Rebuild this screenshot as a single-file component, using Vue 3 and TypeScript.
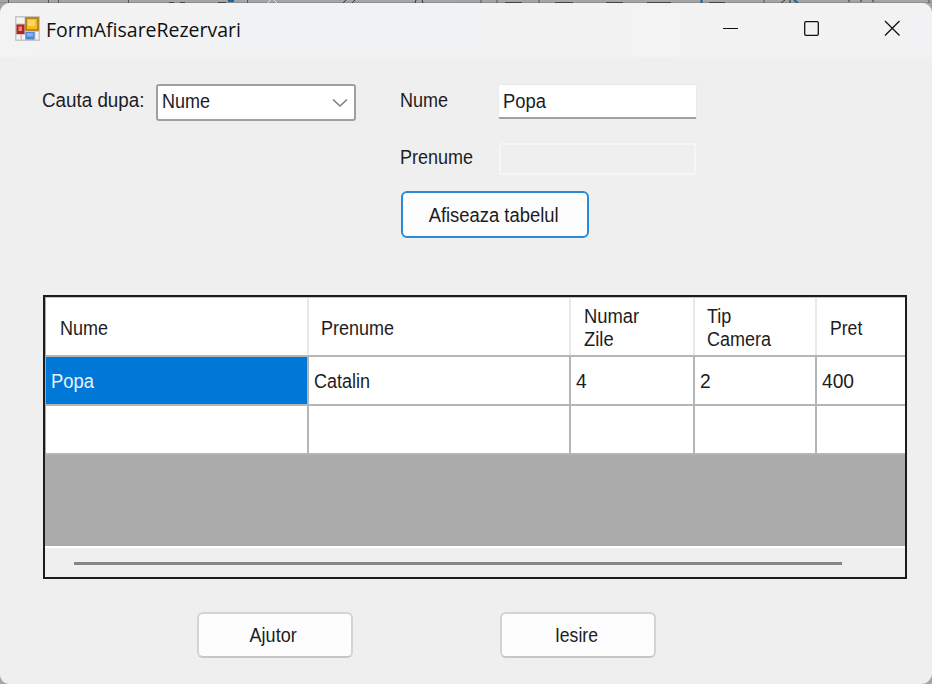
<script setup lang="ts">
import { ref } from 'vue'

interface Column {
  key: string
  lines: string[]
  fit: string
}

interface Cell {
  text: string
  fit: string
}

const searchBy = ref('Nume')
const lastName = ref('Popa')

const columns: Column[] = [
  { key: 'nume', lines: ['Nume'], fit: 'fit-90' },
  { key: 'prenume', lines: ['Prenume'], fit: 'fit-90' },
  { key: 'zile', lines: ['Numar', 'Zile'], fit: 'fit-92' },
  { key: 'camera', lines: ['Tip', 'Camera'], fit: 'fit-90' },
  { key: 'pret', lines: ['Pret'], fit: 'fit-88' },
]

const rows: Cell[][] = [
  [
    { text: 'Popa', fit: 'fit-92' },
    { text: 'Catalin', fit: 'fit-90' },
    { text: '4', fit: 'fit-96' },
    { text: '2', fit: 'fit-96' },
    { text: '400', fit: 'fit-96' },
  ],
  columns.map(() => ({ text: '', fit: 'fit-90' })),
]
</script>

<template>
  <div class="desktop">
    <svg class="backdrop" width="932" height="3" viewBox="0 0 932 3">
      <path d="M0 2.5H932" stroke="#8f8f8f" />
      <path d="M8.500 0V3M48.500 0V3M58.500 0V3M128.500 0V3M247.500 0V3M481 0V3M497 0V3M539 0V3M764 0V3M929 0V3" stroke="#555" />
      <path d="M169 2.500h5M180 2.500h5M218 2.500h8M505 2.500h17M555 2.500h18M606 2.500h17M647 2.500h24M709 2.500h16" stroke="#444" />
      <path d="M343 3l3-3M352 3l3-3M415 3l1-3M423 3l-1-3M781 3l4-3M790 3v-3M849 0v2M861 0v2M873 0v2" stroke="#333" />
      <path d="M228 1h6M701.500 0v3M794 0l4 3" stroke="#17669f" stroke-width="2" />
      <path d="M268 3l2-3M274 0l3 3" stroke="#ddd" />
    </svg>
    <main class="window">
      <header class="titlebar">
        <svg class="app-icon" width="25" height="25" viewBox="0 0 25 25">
          <rect width="25" height="25" rx="1" fill="#c6c6c6" />
          <rect x="1.500" y="1.500" width="8" height="6" fill="#f4f4f4" />
          <rect x="1.500" y="19" width="4" height="4.500" fill="#f2f2f2" />
          <rect x="7" y="19" width="3" height="4.500" fill="#f2f2f2" />
          <rect x="20.500" y="16" width="3" height="7.500" fill="#f4f4f4" />
          <rect x="1.500" y="8.500" width="8" height="9.500" fill="#b52320" />
          <rect x="3.500" y="10.500" width="3.500" height="4.500" fill="#ee8a82" />
          <rect x="11" y="2" width="12" height="12" fill="#f5bd22" stroke="#b07b07" stroke-width="1.600" />
          <rect x="13" y="4" width="7" height="6" fill="#fbd565" />
          <rect x="10.500" y="16" width="9" height="7.500" fill="#4c83dc" />
          <rect x="12" y="17" width="6" height="3.500" fill="#88aff2" />
        </svg>
        <h1 class="title">FormAfisareRezervari</h1>
        <svg class="controls" width="200" height="24" viewBox="0 0 200 24" fill="none" stroke="#111">
          <path d="M11 11.500H26" />
          <rect x="92.700" y="4.700" width="13.600" height="13.600" rx="1.200" stroke-width="1.300" />
          <path d="M173 4L187.500 18.500M187.500 4L173 18.500" stroke-width="1.300" />
        </svg>
      </header>

      <section class="form">
        <div class="search">
          <span class="caption"><span class="fit fit-94">Cauta dupa:</span></span>
          <div class="combo">
            <span class="fit fit-90">{{ searchBy }}</span>
            <svg width="16" height="10" viewBox="0 0 16 10" fill="none" stroke="#7c7c7c" stroke-width="1.500">
              <path d="M1 1.500L8 8L15 1.500" />
            </svg>
          </div>
        </div>
        <div class="fields">
          <div class="field">
            <span class="caption"><span class="fit fit-90">Nume</span></span>
            <div class="input"><span class="fit fit-92">{{ lastName }}</span></div>
          </div>
          <div class="field second">
            <span class="caption"><span class="fit fit-90">Prenume</span></span>
            <div class="input disabled"></div>
          </div>
          <button class="button primary"><span class="fit center fit-92">Afiseaza tabelul</span></button>
        </div>
      </section>

      <section class="grid">
        <div class="row head">
          <div v-for="c in columns" :key="c.key" class="cell" :class="c.key">
            <div v-for="line in c.lines" :key="line" class="line"><span class="fit" :class="c.fit">{{ line }}</span></div>
          </div>
        </div>
        <div v-for="(r, i) in rows" :key="i" class="row">
          <div v-for="(cell, j) in r" :key="j" class="cell" :class="{ selected: i === 0 && j === 0 }">
            <span class="fit" :class="cell.fit">{{ cell.text }}</span>
          </div>
        </div>
        <div class="empty"></div>
        <div class="scroll"><div class="thumb"></div></div>
      </section>

      <footer class="actions">
        <button class="button"><span class="fit center fit-90">Ajutor</span></button>
        <button class="button"><span class="fit center fit-88">Iesire</span></button>
      </footer>
    </main>
  </div>
</template>

<style>
body {
  background: #a5a5a5;
  overflow: hidden;
}
</style>

<style scoped>
* {
  box-sizing: border-box;
}
.desktop {
  width: 932px;
  height: 684px;
  background: #a5a5a5;
  font: 20px/23px "Liberation Sans", Arial, sans-serif;
  color: #1c1c24;
}
.backdrop {
  display: block;
}
.window {
  height: 681px;
  background: #efefef;
  border-radius: 10px 10px 11px 9px;
  overflow: hidden;
}
.titlebar {
  height: 54px;
  padding: 0 20px 0 15px;
  display: flex;
  align-items: flex-start;
  background: linear-gradient(90deg, #f3f3f3, #f1f2f4 40%, #f3f3f3 70%, #f2f2f4);
}
.app-icon {
  margin-top: 13px;
}
.title {
  margin: 11px 0 0 6px;
  font: 20.5px/30px "Open Sans", "Noto Sans", sans-serif;
  color: #111;
  transform: scaleX(0.95);
  transform-origin: left;
}
.controls {
  margin: 14px 0 0 auto;
}
.fit {
  display: inline-block;
  white-space: nowrap;
  transform-origin: left;
}
.fit.center {
  transform-origin: center;
}
.fit-88 { transform: scaleX(0.88); }
.fit-90 { transform: scaleX(0.9); }
.fit-92 { transform: scaleX(0.92); }
.fit-94 { transform: scaleX(0.94); }
.fit-96 { transform: scaleX(0.96); }
.form {
  height: 238px;
  padding: 27px 0 0 41px;
  display: flex;
}
.search {
  display: flex;
  width: 358px;
}
.search .caption {
  width: 115px;
  padding: 5px 0 0 1px;
}
.combo {
  width: 200px;
  height: 37px;
  padding: 0 6px 2px 4px;
  display: flex;
  align-items: center;
  justify-content: space-between;
  background: #fff;
  border: 2px solid #a0a0a0;
  border-radius: 3px;
}
.combo svg {
  margin-top: 2px;
}
.field {
  display: flex;
  height: 59px;
}
.field.second {
  height: 48px;
}
.field .caption {
  width: 99px;
  padding: 5px 0 0 1px;
}
.field.second .caption {
  padding-top: 3px;
}
.input {
  width: 199px;
  height: 35px;
  padding: 5px 4px;
  background: #fff;
  border: 1px solid #e9e9e9;
  border-bottom: 2px solid #a0a0a0;
  border-radius: 2px;
}
.input.disabled {
  width: 197px;
  height: 32px;
  margin-left: 1px;
  background: #efefef;
  border: 2px solid #f6f6f6;
}
.button {
  width: 156px;
  height: 46px;
  padding: 0 4px 0 0;
  display: flex;
  align-items: center;
  justify-content: center;
  font: inherit;
  color: inherit;
  background: #fdfdfd;
  border: 2px solid #d3d3d3;
  border-bottom-color: #c6c6c6;
  border-radius: 6px;
}
.button.primary {
  width: 188px;
  height: 47px;
  margin-left: 2px;
  padding: 1px 2px 0 0;
  border: 2px solid #2b89da;
  border-radius: 6px;
}
.grid {
  width: 864px;
  height: 284px;
  margin-left: 43px;
  display: flex;
  flex-direction: column;
  border: 2px solid #1c1c1c;
  background: #ababab;
}
.row {
  display: grid;
  grid-template-columns: 263px 262px 124px 122px 1fr;
  height: 49px;
  margin-left: 1px;
  flex: none;
  background: #fff;
  border-bottom: 2px solid #b5b5b5;
}
.row.head {
  height: 60px;
  border-top: 1px solid #c4c4c4;
}
.cell {
  padding: 2px 0 0 5px;
  display: flex;
  align-items: center;
  border-right: 2px solid #b5b5b5;
}
.cell:last-child {
  border-right: 0;
}
.head .cell {
  padding: 3px 0 0 13px;
  flex-direction: column;
  align-items: flex-start;
  justify-content: center;
  border-right-color: #e9e9e9;
}
.head .cell.nume {
  padding-left: 14px;
}
.head .cell.prenume {
  padding-left: 12px;
}
.head .cell.camera {
  padding-left: 12px;
}
.cell.selected {
  background: #0078d7;
  color: #e9f3fc;
}
.line {
  height: 23px;
}
.empty {
  flex: 1;
}
.scroll {
  height: 31px;
  padding: 14px 63px 0 29px;
  background: #efefef;
  border-top: 2px solid #fff;
}
.thumb {
  height: 3px;
  background: #858585;
}
.actions {
  display: flex;
  gap: 147px;
  padding: 33px 0 0 197px;
}
</style>
